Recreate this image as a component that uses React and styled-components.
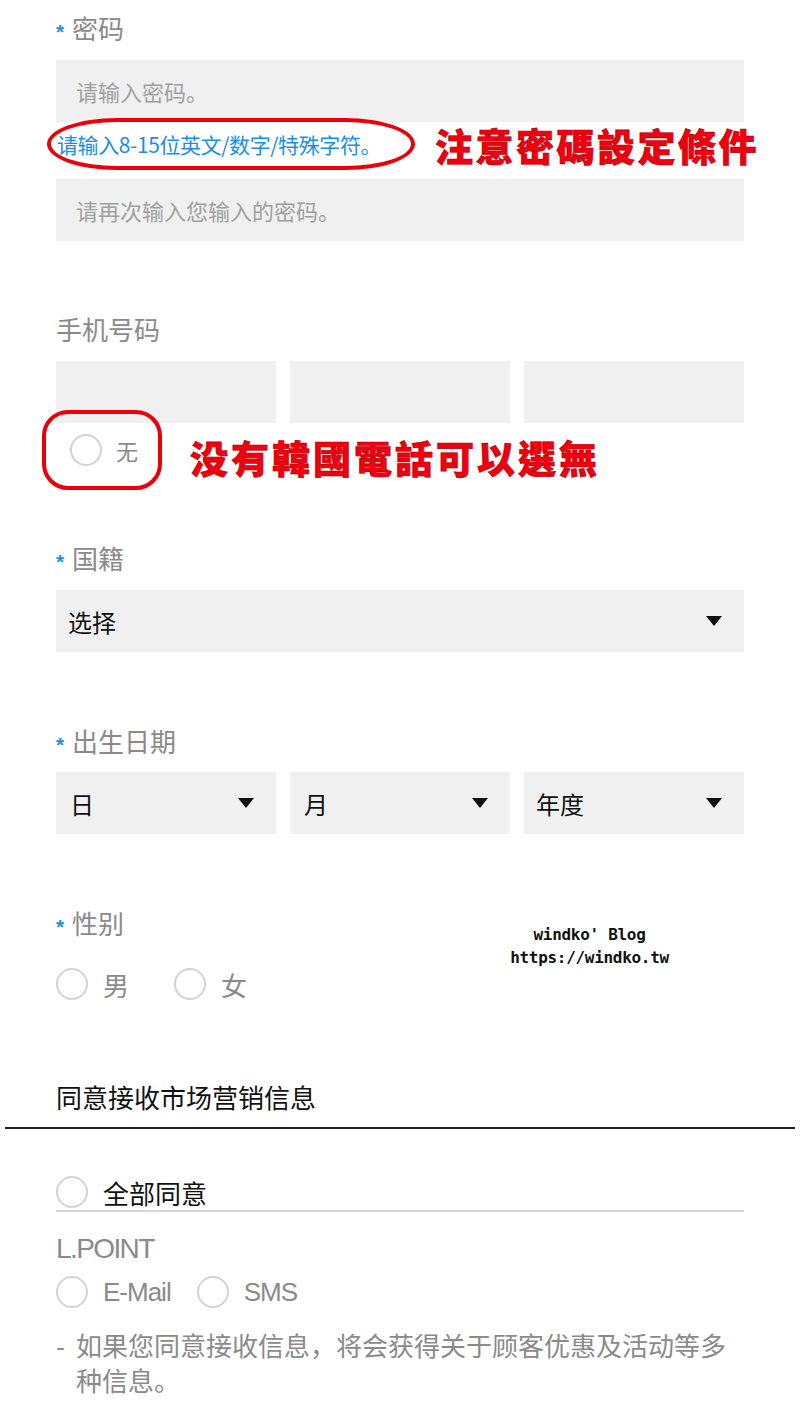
import React from 'react';
import styled, { createGlobalStyle } from 'styled-components';

const Global = createGlobalStyle`
  body {
    margin: 0;
    background: #fff;
    font-family: "Noto Sans CJK SC", "Liberation Sans", sans-serif;
  }
`

const Page = styled.div`
  width: 800px;
  padding: 13px 56px 0;
  box-sizing: border-box;
`

const Label = styled.div`
  display: flex;
  align-items: center;
  height: 30px;
  margin-top: ${p => p.top || 0}px;
  font-size: 26px;
  color: #8a8a8a;
  line-height: 30px;
`

const Star = styled.span`
  color: #1e8ee4;
  font-size: 21px;
  font-weight: bold;
  width: 16px;
  margin-top: 8px;
  font-family: "Liberation Sans", sans-serif;
`

const Input = styled.div`
  height: 62px;
  background: #f0f0f0;
  display: flex;
  align-items: center;
  padding-left: 20px;
  font-size: 22px;
  color: #a0a0a0;
  margin-top: ${p => p.top || 0}px;
`

const HintRow = styled.div`
  display: flex;
  align-items: center;
  margin: -4px 0 9px -9px;
  height: 52px;
`

const Oval = styled.div`
  flex: none;
  width: 368px;
  height: 52px;
  box-sizing: border-box;
  border: 4px solid #e8000a;
  border-radius: 70px / 26px;
  background: #fff;
  display: flex;
  align-items: center;
  padding-left: 6px;
  font-size: 21px;
  color: #1b8ee0;
  letter-spacing: -0.4px;
  white-space: nowrap;
`

const Note = styled.div`
  flex: none;
  font-family: "Noto Sans CJK TC", sans-serif;
  font-weight: 900;
  color: #ee0010;
  font-size: 38px;
  letter-spacing: ${p => p.spacing || 2.5}px;
  margin-left: ${p => p.left || 20}px;
  margin-top: ${p => p.down || 0}px;
  -webkit-text-stroke: 0.6px #b00000;
  white-space: nowrap;
`

const Triple = styled.div`
  display: grid;
  grid-template-columns: ${p => p.single ? '1fr' : 'repeat(3, 1fr)'};
  gap: 14px;
  margin-top: ${p => p.top || 0}px;
`

const Box = styled.div`
  height: 62px;
  background: #f0f0f0;
  display: flex;
  align-items: center;
  justify-content: space-between;
  padding: 0 22px 0 ${p => p.pad || 12}px;
  font-size: 24px;
  color: #111;
`

const Arrow = styled.span`
  width: 0;
  height: 0;
  border-left: 8px solid transparent;
  border-right: 8px solid transparent;
  border-top: 10px solid #111;
`

const NoneRow = styled.div`
  display: flex;
  align-items: center;
  margin: -13px 0 0 -14px;
`

const NoneBox = styled.div`
  flex: none;
  width: 120px;
  height: 80px;
  box-sizing: border-box;
  border: 4px solid #e8000a;
  border-radius: 26px;
  display: flex;
  align-items: center;
  padding-left: 24px;
  gap: 14px;
  font-size: 22px;
  color: #8a8a8a;
`

const Circle = styled.span`
  width: 32px;
  height: 32px;
  box-sizing: border-box;
  border: 2px solid #d3d3d3;
  border-radius: 50%;
  flex: none;
`

const Radios = styled.div`
  display: flex;
  align-items: center;
  gap: ${p => p.gap || 30}px;
  margin-top: ${p => p.top || 0}px;
  height: 32px;
`

const Radio = styled.div`
  display: flex;
  align-items: center;
  gap: 15px;
  font-size: 26px;
  color: ${p => p.dark ? '#111' : '#8a8a8a'};
  font-family: ${p => p.latin ? '"Liberation Sans", sans-serif' : 'inherit'};
  letter-spacing: ${p => p.latin ? '-1px' : '0'};
`

const GenderSection = styled.div`
  position: relative;
`

const Watermark = styled.div`
  position: absolute;
  left: 446px;
  top: 15px;
  width: 175px;
  text-align: center;
  font-family: "DejaVu Sans Mono", monospace;
  font-weight: bold;
  font-size: 16px;
  line-height: 23px;
  color: #111;
  letter-spacing: -0.3px;
`

const Heading = styled.div`
  font-size: 26px;
  line-height: 30px;
  color: #111;
  margin-top: 82px;
`

const DarkRule = styled.hr`
  margin: 15px -51px 0;
  border: none;
  height: 2px;
  background: #222;
`

const LightRule = styled.hr`
  margin: 2px 0 0;
  border: none;
  height: 2px;
  background: #d6d6d6;
`

const PointLabel = styled.div`
  margin-top: 22px;
  font-family: "Liberation Sans", sans-serif;
  font-size: 28px;
  letter-spacing: -1.6px;
  line-height: 30px;
  color: #8a8a8a;
`

const Info = styled.div`
  display: flex;
  margin-top: 19px;
  font-size: 26px;
  line-height: 35px;
  color: #8a8a8a;
`

const Dash = styled.span`
  width: 20px;
  flex: none;
`

export default function App() {
  return (
    <Page>
      <Global />
      <Label><Star>*</Star>密码</Label>
      <Input top={17}>请输入密码。</Input>
      <HintRow>
        <Oval>请输入8-15位英文/数字/特殊字符。</Oval>
        <Note>注意密碼設定條件</Note>
      </HintRow>
      <Input>请再次输入您输入的密码。</Input>

      <Label top={73}>手机号码</Label>
      <Triple top={17}>
        <Box />
        <Box />
        <Box />
      </Triple>
      <NoneRow>
        <NoneBox><Circle />无</NoneBox>
        <Note left={28} down={12} spacing={3}>没有韓國電話可以選無</Note>
      </NoneRow>

      <Label top={53}><Star>*</Star>国籍</Label>
      <Triple top={17} single>
        <Box>选择<Arrow /></Box>
      </Triple>

      <Label top={74}><Star>*</Star>出生日期</Label>
      <Triple top={16}>
        <Box pad={14}>日<Arrow /></Box>
        <Box pad={14}>月<Arrow /></Box>
        <Box pad={12}>年度<Arrow /></Box>
      </Triple>

      <GenderSection>
        <Label top={74}><Star>*</Star>性别</Label>
        <Radios top={30} gap={45}>
          <Radio><Circle />男</Radio>
          <Radio><Circle />女</Radio>
        </Radios>
        <Watermark>windko' Blog<br />https://windko.tw</Watermark>
      </GenderSection>

      <Heading>同意接收市场营销信息</Heading>
      <DarkRule />
      <Radios top={47}>
        <Radio dark><Circle />全部同意</Radio>
      </Radios>
      <LightRule />
      <PointLabel>L.POINT</PointLabel>
      <Radios top={12} gap={26}>
        <Radio latin><Circle />E-Mail</Radio>
        <Radio latin><Circle />SMS</Radio>
      </Radios>
      <Info>
        <Dash>-</Dash>
        <span>如果您同意接收信息，将会获得关于顾客优惠及活动等多种信息。</span>
      </Info>
    </Page>
  );
}
